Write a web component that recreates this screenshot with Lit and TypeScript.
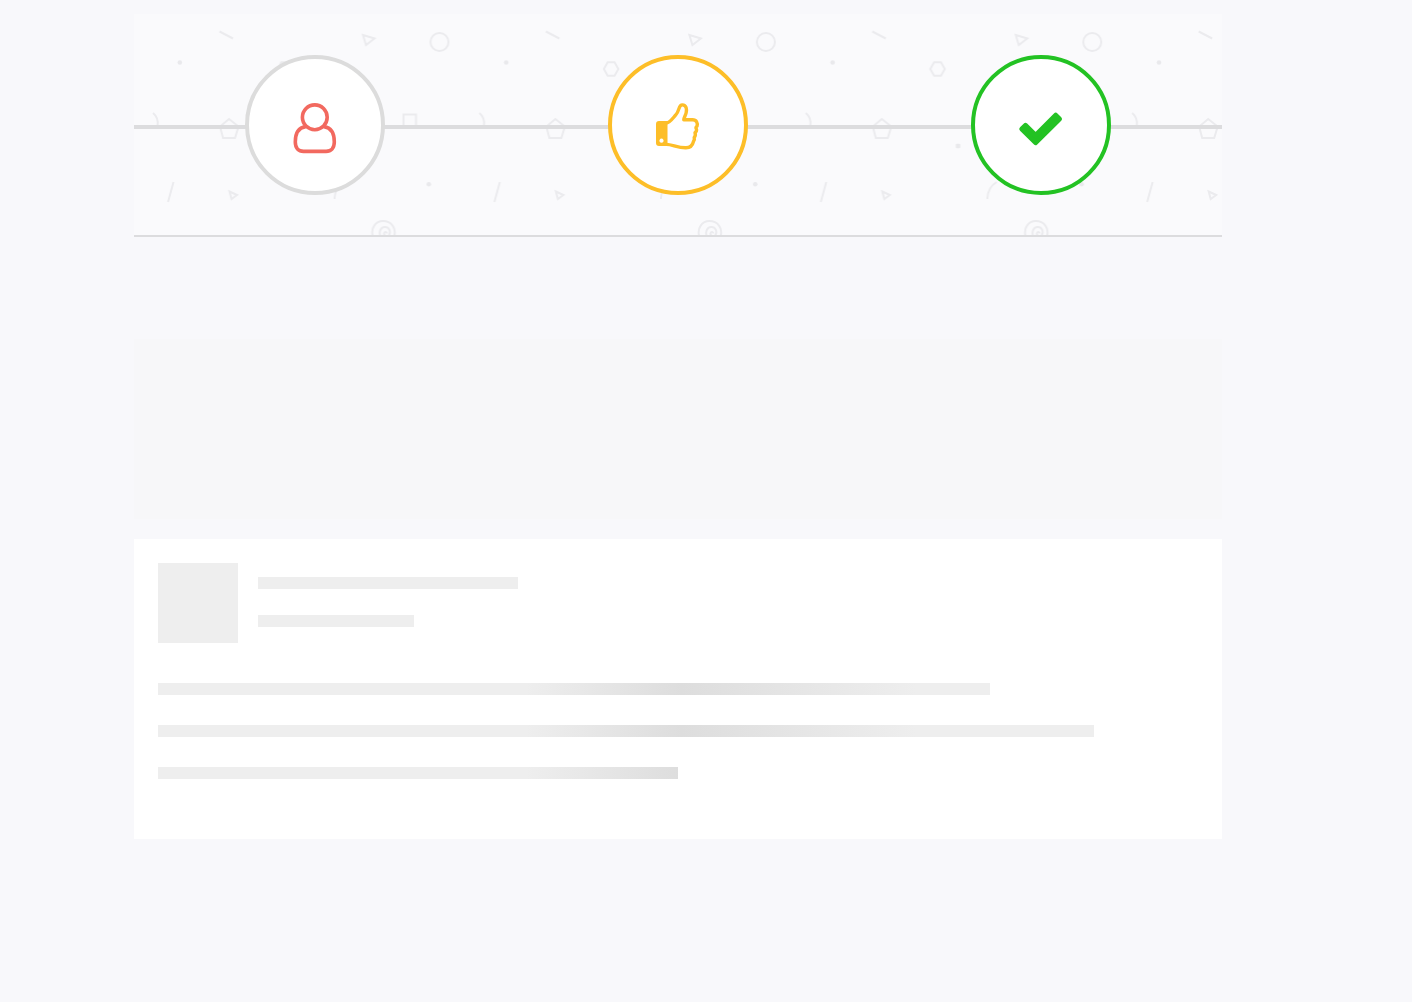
import { LitElement, html, css, svg } from "lit";
import { customElement } from "lit/decorators.js";

const userIcon = svg`
  <g fill="none" stroke="currentColor" stroke-width="3.6" stroke-linecap="round">
    <circle cx="31.8" cy="24.3" r="12.4" />
    <path d="M22.5 33.6C15.5 34.6 12.300 40.5 12.300 49C12.300 55 15.5 58.4 20.5 58.4H43.100C48 58.4 51.300 55 51.300 49C51.300 40.5 48.100 34.6 41.100 33.6" />
  </g>`;

const thumbIcon = svg`
  <path fill="currentColor" fill-rule="evenodd" d="M13 28H21.5V53H13Q10 53 10 50V31Q10 28 13 28ZM15.5 45.6a2.1 2.1 0 1 0 0.01 0Z" />
  <path fill="none" stroke="currentColor" stroke-width="3.4" stroke-linejoin="round"
    d="M20.5 30C24 29.5 27 25 29.5 22.2C34 18 32 11.9 36.3 11.9C40.6 11.9 40.8 16.5 40.2 19.5C39.8 22 38 24 37.8 26.8H46.5C50.5 26.8 52 30 51 33.2Q49.2 34.6 50.5 36.2Q50.8 38.4 49 39.6Q50 42.6 48.2 44.4Q48.8 46.4 47.5 48.4C46.5 53 44.5 54.8 40 54.8C32 55 26 51.4 20.5 51.4" />`;

const checkIcon = svg`
  <path fill="currentColor" stroke="currentColor" stroke-width="5" stroke-linejoin="round"
    d="M12.8 36L16.4 32.4L26.5 42.4L46.7 22.2L50.5 26L26.5 49.6Z" />`;

const steps = [
  { tone: "neutral", label: "Profile", icon: userIcon },
  { tone: "amber", label: "Approval", icon: thumbIcon },
  { tone: "green", label: "Complete", icon: checkIcon },
];

@customElement("app-root")
export class AppRoot extends LitElement {
  static styles = css`
    :host {
      display: block;
      box-sizing: border-box;
      min-height: 100vh;
      padding: 14px 190px 40px 134px;
      background: #f8f8fb;
      font-family: "Open Sans", sans-serif;
    }
    .progress {
      position: relative;
      padding: 41px 0 40px;
      border-bottom: 2px solid #dcdcde;
      background: #fafafc;
    }
    .confetti {
      position: absolute;
      inset: 0;
      width: 100%;
      height: 100%;
    }
    .steps {
      position: relative;
      display: grid;
      grid-template-columns: repeat(3, 1fr);
      justify-items: center;
      margin: 0;
      padding: 0;
      list-style: none;
    }
    .steps::before {
      content: "";
      position: absolute;
      top: 50%;
      left: 0;
      right: 0;
      height: 4px;
      background: #dcdcde;
    }
    .step {
      position: relative;
      display: grid;
      place-items: center;
      box-sizing: border-box;
      width: 140px;
      height: 140px;
      border: 4px solid;
      border-radius: 50%;
      background: #fff;
    }
    .icon {
      display: block;
      width: 64px;
      height: 64px;
    }
    .neutral { border-color: #dcdcdc; color: #f2695f; }
    .amber { border-color: #fdbe28; color: #fdbe28; }
    .green { border-color: #23c223; color: #23c223; }
    .banner {
      height: 180px;
      margin: 102px 0 20px;
      background: #f7f7f9;
    }
    .card {
      padding: 24px 24px 60px;
      background: #fff;
    }
    .head {
      display: grid;
      grid-template-columns: 80px 1fr;
      gap: 20px;
      margin-bottom: 40px;
    }
    .avatar {
      height: 80px;
      background: #eee;
    }
    .titles {
      display: grid;
      align-content: start;
      gap: 26px;
      padding-top: 14px;
    }
    .title {
      width: 260px;
      height: 12px;
      background: #eee;
    }
    .short { width: 156px; }
    .lines {
      display: grid;
      gap: 30px;
    }
    .line {
      height: 12px;
      background: linear-gradient(90deg, #eee 368px, #ddd 524px, #eee 758px);
    }
  `;

  private pattern() {
    return html`
      <svg class="confetti" aria-hidden="true">
        <defs>
          <pattern id="shapes" width="326.4" height="223" patternUnits="userSpaceOnUse">
            <g fill="none" stroke="#ebebee" stroke-width="2">
              <path d="M85.5 17.500L99 24.500" />
              <path d="M229 21L240.5 24.5L232 31Z" />
              <circle cx="305.5" cy="28" r="9" />
              <path d="M143.5 55L147.300 48.300H154.200L158 55L154.200 61.700H147.300Z" />
              <path d="M19 99Q25 104 23.5 112" />
              <path d="M269.5 113V100.5H282V113" />
              <path d="M95 105L104.5 112.5L101 124H89L86 112.5Z" />
              <path d="M39.5 168L34 188" />
              <path d="M95.500 177.500L103 181L97.500 185Z" />
              <path d="M200.5 185Q201 173 210 168" />
              <path d="M239 223C236 214 242 207 249 207C257 207 263 214 260 223" />
              <path d="M246.500 223C244.500 217 247 213 251 213C255.500 213 257 218 255 221C253 223.500 248.500 221 250.500 218.500C251.500 217.500 253 218 253 219.500" />
            </g>
            <g fill="#e9e9ec">
              <circle cx="45.800" cy="48.5" r="2.3" />
              <circle cx="294.8" cy="170.2" r="2.3" />
              <rect x="169" y="129.800" width="4.5" height="4.5" rx="1" />
            </g>
          </pattern>
        </defs>
        <rect width="100%" height="100%" fill="url(#shapes)" />
      </svg>`;
  }

  render() {
    return html`
      <main>
        <section class="progress">
          ${this.pattern()}
          <ol class="steps">
            ${steps.map(
              (s) => html`<li class="step ${s.tone}">
                <svg class="icon" viewBox="0 0 64 64" role="img" aria-label=${s.label}>${s.icon}</svg>
              </li>`
            )}
          </ol>
        </section>
        <div class="banner"></div>
        <section class="card" aria-busy="true">
          <div class="head">
            <div class="avatar"></div>
            <div class="titles">
              <div class="title"></div>
              <div class="title short"></div>
            </div>
          </div>
          <div class="lines">
            ${[80, 90, 50].map((w) => html`<div class="line" style="width:${w}%"></div>`)}
          </div>
        </section>
      </main>`;
  }
}
